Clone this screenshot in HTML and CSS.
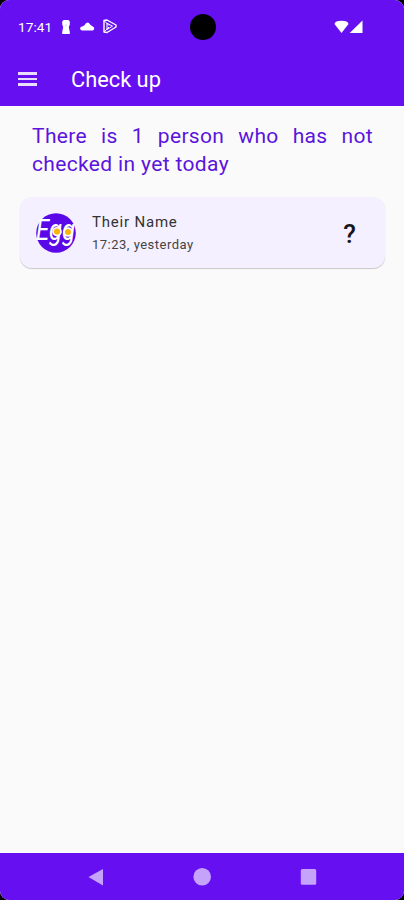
FILE: index.html
```html
<!DOCTYPE html>
<html lang="en">
<head>
    <meta charset="UTF-8">
    <meta name="viewport" content="width=device-width, initial-scale=1.0">
    <title>Check up</title>
    <link rel="stylesheet" href="styles.css">
</head>
<body>
    <div class="screen">
        <header class="top">
            <div class="status-bar">
                <span class="clock">17:41</span>
                <svg class="icon-key" width="8" height="14" viewBox="0 0 8 14">
                    <path d="M1.500 0h5L7.800 1.500v3L6.800 7l1 5v2H.200v-2l1-5L.200 4.500v-3z" fill="#fff"/>
                    <path d="M3 4.500h2v1.500H3z" fill="#e6dafe"/>
                </svg>
                <svg class="icon-cloud" width="15" height="9" viewBox="0 0 15 9">
                    <path d="M2 8.500a2 2 0 0 1 .3-4L4.500 3.300Q7.300-2 10.500 3l2.300 1.400A2.200 2.200 0 0 1 12.800 8.500z" fill="#fff"/>
                </svg>
                <svg class="icon-play" width="14" height="15" viewBox="0 0 14 15" fill="none" stroke="#fff" stroke-width="1.400" stroke-linejoin="round">
                    <path d="M1 1.500 4 1l9 5v2l-9 5.500-3-.5z"/>
                    <path d="M4 4.200 9.500 7.200 4 10.500zM1 1.500l5 5M1 13l5-5" stroke-width="1"/>
                </svg>
                <span class="camera"></span>
                <svg class="icon-signal" width="30" height="14" viewBox="0 0 30 14" fill="#fff">
                    <path d="M.500 4Q1 .800 7.500.800T14.500 4L7.500 13z"/>
                    <path d="M28.500.500V13H15.700z"/>
                </svg>
            </div>
            <div class="app-bar">
                <button class="menu" aria-label="Menu"><i></i><i></i><i></i></button>
                <h1>Check up</h1>
            </div>
        </header>

        <main>
            <p class="summary">There is 1 person who has not checked in yet today</p>
            <div class="card">
                <svg class="avatar" width="40" height="40" viewBox="0 0 40 40">
                    <circle cx="20" cy="20" r="19.800" fill="#5a08e8"/>
                    <text class="logo-text" x="0" y="26.500" font-size="30" textLength="39" lengthAdjust="spacingAndGlyphs">Egg</text>
                    <g fill="#fff">
                        <circle cx="21" cy="18.700" r="4.800"/>
                        <circle cx="32" cy="19" r="4.800"/>
                    </g>
                    <g fill="#f9b50b">
                        <circle cx="21" cy="18.500" r="3.100"/>
                        <circle cx="32" cy="19" r="3"/>
                    </g>
                </svg>
                <div class="person">
                    <div class="name">Their Name</div>
                    <div class="time">17:23, yesterday</div>
                </div>
                <span class="state">?</span>
            </div>
        </main>

        <nav class="nav-bar">
            <svg width="18" height="18" viewBox="0 0 18 18"><path d="M1.500 9 16 1v16.500z"/></svg>
            <svg width="18" height="18" viewBox="0 0 18 18"><circle cx="9.200" cy="8.800" r="8.800"/></svg>
            <svg width="18" height="18" viewBox="0 0 18 18"><rect x="1.800" y="1" width="15.400" height="15.800" rx="1.500"/></svg>
        </nav>
    </div>
</body>
</html>
```

FILE: styles.css
```css
body {
    margin: 0;
    background-color: #000;
    font-family: Roboto, sans-serif;
}
.screen {
    display: flex;
    flex-direction: column;
    height: 900px;
    border-radius: 9px;
    overflow: hidden;
    background-color: #fafafa;
}
.top {
    height: 106px;
    background-color: #6610f2;
    color: #fff;
}
.status-bar {
    display: flex;
    align-items: center;
    height: 53px;
    padding-left: 18px;
}
.clock {
    width: 34px;
    font-size: 13.7px;
}
.icon-key {
    margin-left: 10px;
}
.icon-cloud {
    margin-left: 10px;
}
.icon-play {
    margin-left: 8px;
}
.camera {
    width: 26px;
    height: 26px;
    margin-left: 73px;
    border-radius: 50%;
    background-color: #000;
}
.icon-signal {
    margin-left: 118px;
}
.app-bar {
    display: flex;
    align-items: center;
    height: 52px;
    padding-left: 18px;
}
.menu {
    display: flex;
    flex-direction: column;
    gap: 3px;
    width: 19px;
    padding: 0;
    border: 0;
    background: none;
}
.menu i {
    height: 2.5px;
    background-color: #eadcff;
}
h1 {
    margin: 0 0 0 34px;
    font-size: 21.8px;
    font-weight: 400;
}
main {
    flex: 1;
    padding: 16px 19px 0 20px;
}
.summary {
    margin: 0 12px 19px;
    font-size: 21px;
    line-height: 28px;
    letter-spacing: 0.35px;
    text-align: justify;
    color: #5a14dc;
}
.card {
    display: flex;
    align-items: center;
    box-sizing: border-box;
    height: 71px;
    padding: 0 29px 0 16px;
    border-radius: 12px;
    background-color: #f5f0ff;
    box-shadow: 0 1px 1px rgba(0, 0, 0, 0.2);
}
.avatar {
    overflow: visible;
}
.logo-text {
    fill: #fff;
    font-style: italic;
}
.person {
    flex: 1;
    margin-left: 16px;
}
.name {
    font-size: 15px;
    line-height: 22px;
    letter-spacing: 0.8px;
    color: #333;
}
.time {
    padding-top: 1px;
    font-size: 13px;
    line-height: 21px;
    letter-spacing: 0.5px;
    color: #444;
}
.state {
    padding-top: 2px;
    font-size: 26px;
    font-weight: 500;
    color: #18151d;
}
.nav-bar {
    display: flex;
    align-items: center;
    justify-content: center;
    gap: 88px;
    height: 47px;
    background-color: #6610f2;
    fill: #c6a3fb;
}
```
